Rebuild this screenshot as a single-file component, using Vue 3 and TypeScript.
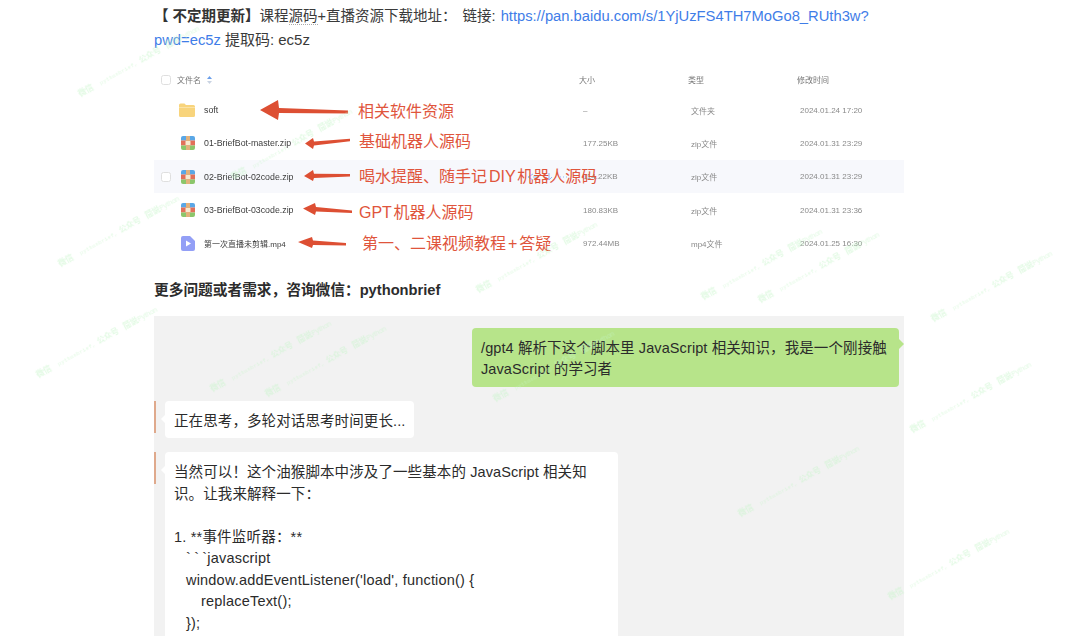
<script setup lang="ts">
interface FileRow { name: string; size: string; type: string; time: string; icon: 'folder' | 'zip' | 'video'; hover?: boolean }
const files: FileRow[] = [
  { name: 'soft', size: '–', type: '文件夹', time: '2024.01.24 17:20', icon: 'folder' },
  { name: '01-BriefBot-master.zip', size: '177.25KB', type: 'zip文件', time: '2024.01.31 23:29', icon: 'zip' },
  { name: '02-BriefBot-02code.zip', size: '114.22KB', type: 'zip文件', time: '2024.01.31 23:29', icon: 'zip', hover: true },
  { name: '03-BriefBot-03code.zip', size: '180.83KB', type: 'zip文件', time: '2024.01.31 23:36', icon: 'zip' },
  { name: '第一次直播未剪辑.mp4', size: '972.44MB', type: 'mp4文件', time: '2024.01.25 16:30', icon: 'video' },
]
const notes = [
  { text: '相关软件资源', x: 358, y: 111 },
  { text: '基础机器人源码', x: 359, y: 141 },
  { text: '喝水提醒、随手记 DIY 机器人源码', x: 359, y: 176 },
  { text: 'GPT 机器人源码', x: 359, y: 212 },
  { text: '第一、二课视频教程 + 答疑', x: 362, y: 243 },
]
const arrows = [
  'M260 110 L278 100 L279 108 L348 110.5 L348 113.5 L279 113 L278 120 Z',
  'M305 143.5 L313 138 L314 141.5 L350 138.8 L350 141.2 L314 145.5 L313 149 Z',
  'M304 176 L313 170 L314 173.8 L350 174 L350 176.5 L314 178 L313 181 Z',
  'M303 208.5 L315 203 L316 207 L352 210.5 L352 213 L316 211.5 L315 215 Z',
  'M298 242 L312 237 L313 240.5 L346 243 L346 245.5 L313 245 L312 248 Z',
]
const marks = [
  [80, 97], [60, 267], [38, 378], [233, 180], [212, 392], [267, 397], [478, 293],
  [495, 402], [703, 300], [760, 303], [740, 517], [890, 600], [933, 322], [912, 433],
]
const chatLines = [
  { text: '1. **事件监听器：**', indent: 0 },
  { text: '`\u2009`\u2009`javascript', indent: 12 },
  { text: "window.addEventListener('load', function() {", indent: 12 },
  { text: 'replaceText();', indent: 27 },
  { text: '});', indent: 12 },
]
</script>

<template>
  <div class="page">
    <main class="column">
      <p class="intro">
        <strong>【 不定期更新】</strong>课程<span class="dotted">源码</span>+直播资源下载地址： &nbsp;<span class="label">链接: </span><a class="link">https://pan.baidu.com/s/1YjUzFS4TH7MoGo8_RUth3w?pwd=ec5z</a> <span class="code-tail">提取码: ec5z</span>
      </p>

      <section class="table">
        <div class="grid head">
          <span class="check"></span>
          <span class="head-name">文件名
            <svg class="sort" width="5" height="8" viewBox="0 0 5 8"><path d="M2.500 0 5 3H0Z" fill="#6a9eea" /><path d="M2.500 8 5 5H0Z" fill="#c9d3e2" /></svg>
          </span>
          <span class="size">大小</span>
          <span class="type">类型</span>
          <span class="time">修改时间</span>
        </div>
        <div v-for="f in files" :key="f.name" class="grid row" :class="{ hover: f.hover }">
          <span class="check" :class="{ hidden: !f.hover }"></span>
          <span class="file">
            <svg v-if="f.icon === 'folder'" class="ico folder" width="16" height="16" viewBox="0 0 16 16">
              <path d="M0 3a1.500 1.500 0 0 1 1.500-1.500h4L7 3h7.500A1.500 1.500 0 0 1 16 4.500v9a1.500 1.500 0 0 1-1.500 1.500h-13A1.500 1.500 0 0 1 0 13.500Z" fill="#f8d47c" />
              <path d="M0 5h16v1H0Z" fill="#fbe3a6" />
            </svg>
            <svg v-else-if="f.icon === 'zip'" class="ico" width="14" height="14" viewBox="0 0 14 14">
              <defs><clipPath id="zc"><rect width="14" height="14" rx="2" /></clipPath></defs>
              <g clip-path="url(#zc)">
                <rect width="14" height="4.500" fill="#5aa7e6" />
                <rect y="4.500" width="14" height="5" fill="#e2705a" />
                <rect y="9.500" width="14" height="4.500" fill="#8cc66b" />
                <rect x="5" width="4" height="14" fill="#e3b27c" />
                <rect x="4.500" y="5" width="5" height="4" rx=".6" fill="#f8ead0" />
              </g>
            </svg>
            <svg v-else class="ico" width="14" height="15" viewBox="0 0 14 15">
              <path d="M2 0h7l5 5v8a2 2 0 0 1-2 2H2a2 2 0 0 1-2-2V2a2 2 0 0 1 2-2Z" fill="#939ff6" />
              <path d="M5 4.500 10 7.500 5 10.500Z" fill="#fff" />
            </svg>
            <span class="fname" :class="{ cjk: f.icon === 'video' }">{{ f.name }}</span>
            <svg v-if="f.hover" class="actions" width="42" height="8" viewBox="0 0 42 8">
              <path d="M6 1 1 4l5 3M6 4h6M22 0v6M19 4l3 3 3-3" fill="none" stroke="#8fbdf5" stroke-width="1" />
              <path d="M33 4h1M36 4h1M39 4h1" stroke="#8fbdf5" stroke-width="1" />
            </svg>
          </span>
          <span class="size val">{{ f.size }}</span>
          <span class="type val">{{ f.type }}</span>
          <span class="time val">{{ f.time }}</span>
        </div>
      </section>

      <p class="more">更多问题或者需求，咨询微信：pythonbrief</p>

      <section class="chat">
        <div class="msg-out">
          <div class="bubble green">/gpt4 解析下这个脚本里 JavaScript 相关知识，我是一个刚接触 JavaScript 的学习者</div>
        </div>
        <div class="msg-in">
          <i class="strip"></i>
          <div class="bubble white">正在思考，多轮对话思考时间更长...</div>
        </div>
        <div class="msg-in">
          <i class="strip"></i>
          <div class="bubble white wide">
            <div>当然可以！这个油猴脚本中涉及了一些基本的 JavaScript 相关知识。让我来解释一下：</div>
            <div class="blank"></div>
            <div v-for="l in chatLines" :key="l.text" class="code" :style="{ paddingLeft: l.indent + 'px' }">{{ l.text }}</div>
          </div>
        </div>
      </section>
    </main>

    <svg class="arrows" width="1080" height="636" viewBox="0 0 1080 636">
      <path v-for="d in arrows" :key="d" :d="d" fill="#dd4f33" />
    </svg>
    <span v-for="n in notes" :key="n.text" class="note" :style="{ left: n.x + 'px', top: n.y - 11 + 'px' }">{{ n.text }}</span>
    <span v-for="m in marks" :key="m[0] * 1000 + m[1]" class="mark" :style="{ left: m[0] + 2 + 'px', top: m[1] - 8 + 'px' }"><b>微信</b><em>pythonbrief,</em><b class="g1">公众号</b><b class="g2">简说</b><u>Python</u></span>
  </div>
</template>

<style>
html, body { margin: 0; background: #fff; }
</style>

<style scoped>
.page {
  position: relative;
  width: 1080px;
  height: 636px;
  overflow: hidden;
  background: #fff;
  font-family: "Liberation Sans", "Noto Sans CJK SC", sans-serif;
  color: #333;
}
.column { width: 750px; margin-left: 154px; display: flex; flex-direction: column; }
p { margin: 0; }
.intro { padding-top: 4px; font-size: 14.500px; line-height: 24px; color: #3a3a3a; }
.intro strong { color: #333; }
.dotted { border-bottom: 1px dotted #aaa; }
.label { margin-left: -2px; }
.link { color: #3f7de8; font-size: 14.750px; margin-left: 1px; }
.code-tail { font-size: 15px; }

.table { margin-top: 14px; filter: blur(.35px); }
.grid {
  display: grid;
  grid-template-columns: 26px 399px 109px 109px 107px;
  align-items: center;
  font-size: 8px;
}
.head { height: 27.500px; color: #777; }
.row { height: 33.300px; color: #8a8a8a; }
.row.hover { background: #f7f8fc; }
.check {
  box-sizing: border-box;
  width: 10px;
  height: 10px;
  margin-left: 7px;
  border: 1px solid #dfdfdf;
  border-radius: 2.500px;
  background: #fff;
}
.check.hidden { visibility: hidden; }
.head-name { margin-left: -3px; display: flex; align-items: center; gap: 6px; }
.file { position: relative; display: flex; align-items: center; height: 100%; }
.ico { flex: none; margin-left: 1px; margin-right: 9px; }
.folder { margin-left: -1px; margin-right: 9px; }
.fname { color: #3c3c3c; font-size: 8.800px; white-space: nowrap; }
.fname.cjk { font-size: 8px; }
.actions { position: absolute; left: 347px; top: 13px; }
.val.size { padding-left: 4px; }
.val.type { padding-left: 3px; }
.val.time { padding-left: 3px; white-space: nowrap; }

.more { margin-top: 18px; font-size: 14.700px; line-height: 24px; font-weight: 700; color: #2c2c2c; }

.chat {
  margin-top: 14px;
  height: 320px;
  box-sizing: border-box;
  padding-top: 12px;
  background: #f2f2f2;
  overflow: hidden;
  display: flex;
  flex-direction: column;
  gap: 14px;
  font-size: 14.500px;
  line-height: 21.500px;
  letter-spacing: .1px;
  color: #2b2b2b;
}
.code { letter-spacing: .2px; }
.msg-out { display: flex; justify-content: flex-end; padding-right: 5px; }
.msg-in { display: flex; align-items: flex-start; gap: 9px; }
.strip { flex: none; width: 2px; height: 32px; background: #dfa98c; }
.bubble { position: relative; box-sizing: border-box; border-radius: 4px; padding: 10px 9px 6px; }
.green { width: 427px; background: #b7e48a; }
.green::after {
  content: "";
  position: absolute;
  right: -5px;
  top: 11px;
  border-left: 5px solid #b7e48a;
  border-top: 5px solid transparent;
  border-bottom: 5px solid transparent;
}
.white { background: #fff; }
.white::before {
  content: "";
  position: absolute;
  left: -4px;
  top: 14px;
  border-right: 4px solid #fff;
  border-top: 4px solid transparent;
  border-bottom: 4px solid transparent;
}
.wide { width: 453px; padding-right: 20px; padding-bottom: 40px; }
.blank { height: 21.500px; }

.arrows { position: absolute; left: 0; top: 0; pointer-events: none; }
.note {
  position: absolute;
  font-size: 16px;
  line-height: 24px;
  word-spacing: -2.500px;
  color: #e0553c;
  white-space: nowrap;
}
.mark {
  position: absolute;
  transform: rotate(-29deg);
  transform-origin: 0 100%;
  font-size: 8px;
  line-height: 10px;
  color: #c5f5c8;
  opacity: .5;
  filter: blur(.2px);
  white-space: nowrap;
}
.mark b { font-weight: 700; }
.mark em { margin-left: 8px; font-style: normal; font-family: "Liberation Mono", monospace; font-size: 5.200px; letter-spacing: .4px; }
.mark .g1 { margin-left: 3px; }
.mark .g2 { margin-left: 6px; }
.mark u { text-decoration: none; font-size: 7px; }
</style>
